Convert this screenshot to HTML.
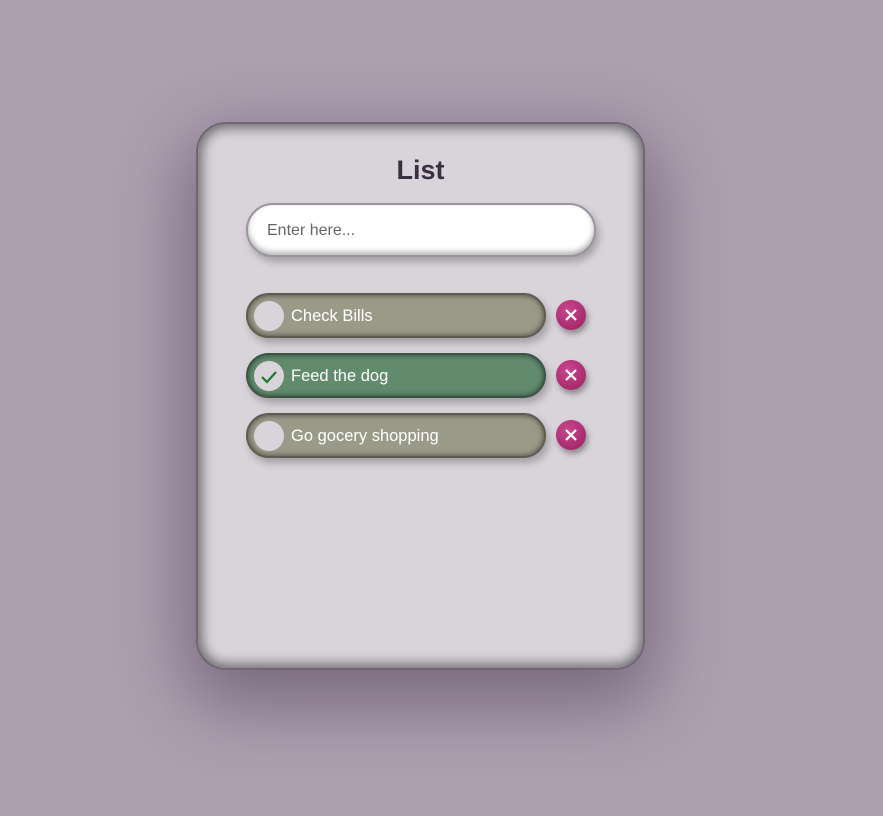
<!DOCTYPE html>
<html><head><style>
html,body{margin:0;width:883px;height:816px;background:#ada0b0;font-family:"Liberation Sans",sans-serif;overflow:hidden}
.card{position:absolute;left:196px;top:122px;width:449px;height:548px;border-radius:30px;background:#d9d4da;
box-shadow:inset 0 0 12px 4px rgba(0,0,0,.5),0 25px 70px 10px rgba(70,50,75,.5);box-sizing:border-box;border:2px solid #6e6670}
h1{position:absolute;left:196px;width:449px;top:155px;margin:0;text-align:center;font-size:27px;font-weight:bold;color:#3a3040}
.inp{position:absolute;left:246px;top:203px;width:350px;height:54px;border-radius:27px;background:#fff;box-sizing:border-box;
border:2px solid #9a949c;box-shadow:inset 0 -3px 6px rgba(0,0,0,.3),3px 5px 8px rgba(0,0,0,.25);font-size:16px;color:#666;line-height:52px;padding-left:19px}
.item{position:absolute;left:246px;width:300px;height:45px;border-radius:23px;box-sizing:border-box;border:2px solid #5e5c50;
background:#9a9a88;box-shadow:inset 0 0 6px rgba(0,0,0,.55),3px 5px 8px rgba(0,0,0,.25);color:#fff;font-size:16.5px;line-height:43px;padding-left:43px}
.item.done{background:#628b6e;border-color:#3c5444}
.c{position:absolute;left:6px;top:6px;width:30px;height:30px;border-radius:50%;background:#d9d4da}
.x{position:absolute;left:556px;width:30px;height:30px;border-radius:50%;background:radial-gradient(circle at 40% 35%,#c84890,#9a1e5e);
box-shadow:2px 4px 6px rgba(0,0,0,.35)}
</style></head><body>
<div class="card"></div>
<h1>List</h1>
<div class="inp">Enter here...</div>
<div class="item" style="top:293px"><div class="c"></div>Check Bills</div>
<div class="item done" style="top:353px"><div class="c"><svg width="30" height="30"><path d="M8 16 L13 21 L22 11" stroke="#1a7a2a" stroke-width="2.2" fill="none"/></svg></div>Feed the dog</div>
<div class="item" style="top:413px"><div class="c"></div>Go gocery shopping</div>
<div class="x" style="top:300px"><svg width="30" height="30"><path d="M10 10L20 20M20 10L10 20" stroke="#fff" stroke-width="2.2"/></svg></div>
<div class="x" style="top:360px"><svg width="30" height="30"><path d="M10 10L20 20M20 10L10 20" stroke="#fff" stroke-width="2.2"/></svg></div>
<div class="x" style="top:420px"><svg width="30" height="30"><path d="M10 10L20 20M20 10L10 20" stroke="#fff" stroke-width="2.2"/></svg></div>
</body></html>
